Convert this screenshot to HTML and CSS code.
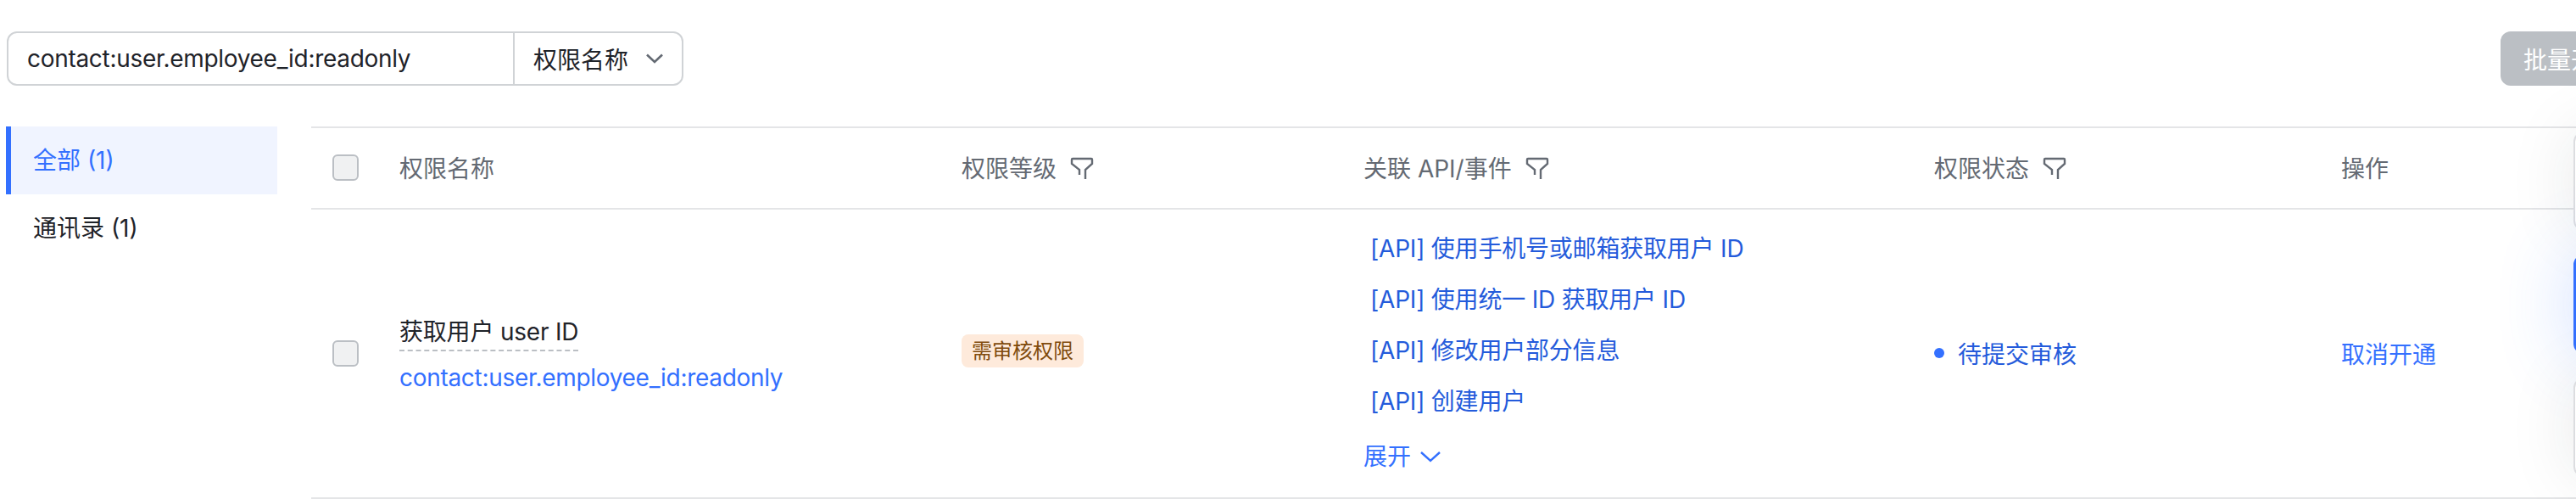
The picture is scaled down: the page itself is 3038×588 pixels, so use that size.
FILE: index.html
```html
<!DOCTYPE html>
<html lang="en">
<head>
  <meta charset="UTF-8" />
  <title>权限配置</title>
  <link rel="stylesheet" href="styles.css">
</head>
<body>

  <div class="toolbar">
    <div class="search-box">
      <div class="search-input">contact:user.employee_id:readonly</div>
      <div class="search-type">
        <span>权限名称</span>
        <svg class="chevron" width="22" height="14" viewBox="0 0 22 14"><path d="M2 2.5 L11 11 L20 2.5" fill="none" stroke="#646a73" stroke-width="2.6"/></svg>
      </div>
    </div>
    <button class="batch-btn">批量开通权限</button>
  </div>

  <div class="content">

    <div class="sidebar">
      <div class="side-item active">全部 (1)</div>
      <div class="side-item">通讯录 (1)</div>
    </div>

    <div class="table">

      <div class="row head">
        <div class="col-check"><span class="checkbox"></span></div>
        <div class="col-name">权限名称</div>
        <div class="col-level">权限等级
          <svg class="filter" width="28" height="28" viewBox="0 0 28 28"><path d="M11 21 V15 L2 8 V3 Q2 2 3 2 H25 Q26 2 26 3 V8 L18 15 V26" fill="none" stroke="#646a73" stroke-width="2.4"/></svg>
        </div>
        <div class="col-api">关联 API/事件
          <svg class="filter" width="28" height="28" viewBox="0 0 28 28"><path d="M11 21 V15 L2 8 V3 Q2 2 3 2 H25 Q26 2 26 3 V8 L18 15 V26" fill="none" stroke="#646a73" stroke-width="2.4"/></svg>
        </div>
        <div class="col-status">权限状态
          <svg class="filter" width="28" height="28" viewBox="0 0 28 28"><path d="M11 21 V15 L2 8 V3 Q2 2 3 2 H25 Q26 2 26 3 V8 L18 15 V26" fill="none" stroke="#646a73" stroke-width="2.4"/></svg>
        </div>
        <div class="col-action">操作</div>
      </div>

      <div class="row body">
        <div class="col-check"><span class="checkbox"></span></div>
        <div class="col-name">
          <div class="perm-title"><span>获取用户 user ID</span></div>
          <a class="perm-key" href="#">contact:user.employee_id:readonly</a>
        </div>
        <div class="col-level"><span class="tag">需审核权限</span></div>
        <div class="col-api">
          <a class="api-link" href="#">[API] 使用手机号或邮箱获取用户 ID</a>
          <a class="api-link" href="#">[API] 使用统一 ID 获取用户 ID</a>
          <a class="api-link" href="#">[API] 修改用户部分信息</a>
          <a class="api-link" href="#">[API] 创建用户</a>
          <a class="expand" href="#">展开
            <svg width="26" height="16" viewBox="0 0 26 16"><path d="M2 3 L13 13 L24 3" fill="none" stroke="#3370ff" stroke-width="2.4"/></svg>
          </a>
        </div>
        <div class="col-status"><span class="dot"></span>待提交审核</div>
        <div class="col-action"><a class="link" href="#">取消开通</a></div>
      </div>

    </div>
  </div>

  <!-- floating panels cut by the right edge -->
  <div class="float-panel panel-a"></div>
  <div class="float-panel panel-blue"></div>
  <div class="float-panel panel-b"></div>

</body>
</html>
```

FILE: styles.css
```css
* {
  margin: 0;
  padding: 0;
  box-sizing: border-box;
}

html, body {
  height: 100%;
  overflow: hidden;
}

body {
  font-family: Inter, "Noto Sans CJK SC", sans-serif;
  font-size: 28px;
  background-color: #fff;
  color: #1f2329;
  width: 3038px;
}

a {
  text-decoration: none;
}

.toolbar {
  display: flex;
  justify-content: space-between;
  align-items: center;
  padding: 37px 0 0 8px;
}

.search-box {
  display: flex;
  width: 798px;
  height: 64px;
  border: 2px solid #d0d3d6;
  border-radius: 12px;
}

.search-input {
  width: 597px;
  padding-left: 22px;
  line-height: 60px;
  letter-spacing: -0.3px;
  border-right: 2px solid #d0d3d6;
}

.search-type {
  flex: 1;
  display: flex;
  align-items: center;
  gap: 20px;
  padding-left: 22px;
}

.batch-btn {
  flex: none;
  width: 200px;
  height: 64px;
  margin-right: -111px;
  background-color: #bbbfc4;
  color: #fff;
  border: none;
  border-radius: 12px;
  font: inherit;
  text-align: left;
  padding-left: 27px;
}

.content {
  display: flex;
  padding: 48px 0 0 7px;
}

.sidebar {
  width: 320px;
}

.side-item {
  height: 80px;
  line-height: 80px;
  padding-left: 32px;
}

.side-item.active {
  background-color: #f0f4ff;
  color: #3370ff;
  border-left: 6px solid #3370ff;
  padding-left: 26px;
}

.table {
  flex: 1;
  margin-left: 40px;
  border-top: 2px solid #e4e5e7;
}

.row {
  display: flex;
  align-items: center;
  border-bottom: 2px solid #e4e5e7;
}

.row.head {
  height: 96px;
  padding-bottom: 2px;
  color: #646a73;
}

.row.body {
  height: 341px;
  padding-bottom: 2px;
}

.col-check {
  width: 104px;
  padding-left: 25px;
  display: flex;
}

.row.body .col-check {
  padding-top: 2px;
}

.checkbox {
  width: 31px;
  height: 31px;
  background-color: #f0f1f2;
  border: 2px solid #bbbfc4;
  border-radius: 6px;
}

.col-name {
  width: 663px;
}

.col-level {
  width: 474px;
}

.row.body .col-level {
  display: flex;
  padding-bottom: 4px;
}

.col-api {
  width: 673px;
}

.col-status {
  width: 480px;
}

.row.body .col-status {
  color: #245bdb;
  display: flex;
  align-items: center;
}

.filter {
  vertical-align: -4px;
  margin-left: 8px;
}

.perm-title {
  letter-spacing: -0.2px;
}

.perm-title span {
  display: inline-block;
  padding-bottom: 3px;
  border-bottom: 2px dashed #bbbfc4;
}

.perm-key {
  display: block;
  margin-top: 14px;
  letter-spacing: -0.3px;
  color: #3370ff;
}

.tag {
  display: inline-block;
  background-color: #feeadb;
  color: #7f4a0c;
  font-size: 24px;
  line-height: 39px;
  padding: 0 12px;
  border-radius: 8px;
}

.api-link {
  display: block;
  color: #245bdb;
  padding-left: 8px;
  line-height: 60px;
  letter-spacing: -0.2px;
}

.expand {
  display: flex;
  align-items: center;
  gap: 10px;
  color: #3370ff;
  line-height: 60px;
  margin-top: 5px;
}

.dot {
  width: 12px;
  height: 12px;
  margin-right: 16px;
  background-color: #3370ff;
  border-radius: 50%;
}

.link {
  color: #3370ff;
}

.float-panel {
  position: absolute;
  left: 3035px;
  width: 120px;
  height: 117px;
  border-radius: 12px;
  background-color: #fff;
  border: 2px solid #dcdde0;
  box-shadow: 0 0 80px rgba(31, 35, 41, 0.1);
}

.panel-a {
  top: 155px;
}

.panel-blue {
  top: 300px;
  background-color: #3370ff;
  border-color: #3370ff;
  box-shadow: 0 0 90px rgba(51, 112, 255, 0.24);
}

.panel-b {
  top: 445px;
}
```
